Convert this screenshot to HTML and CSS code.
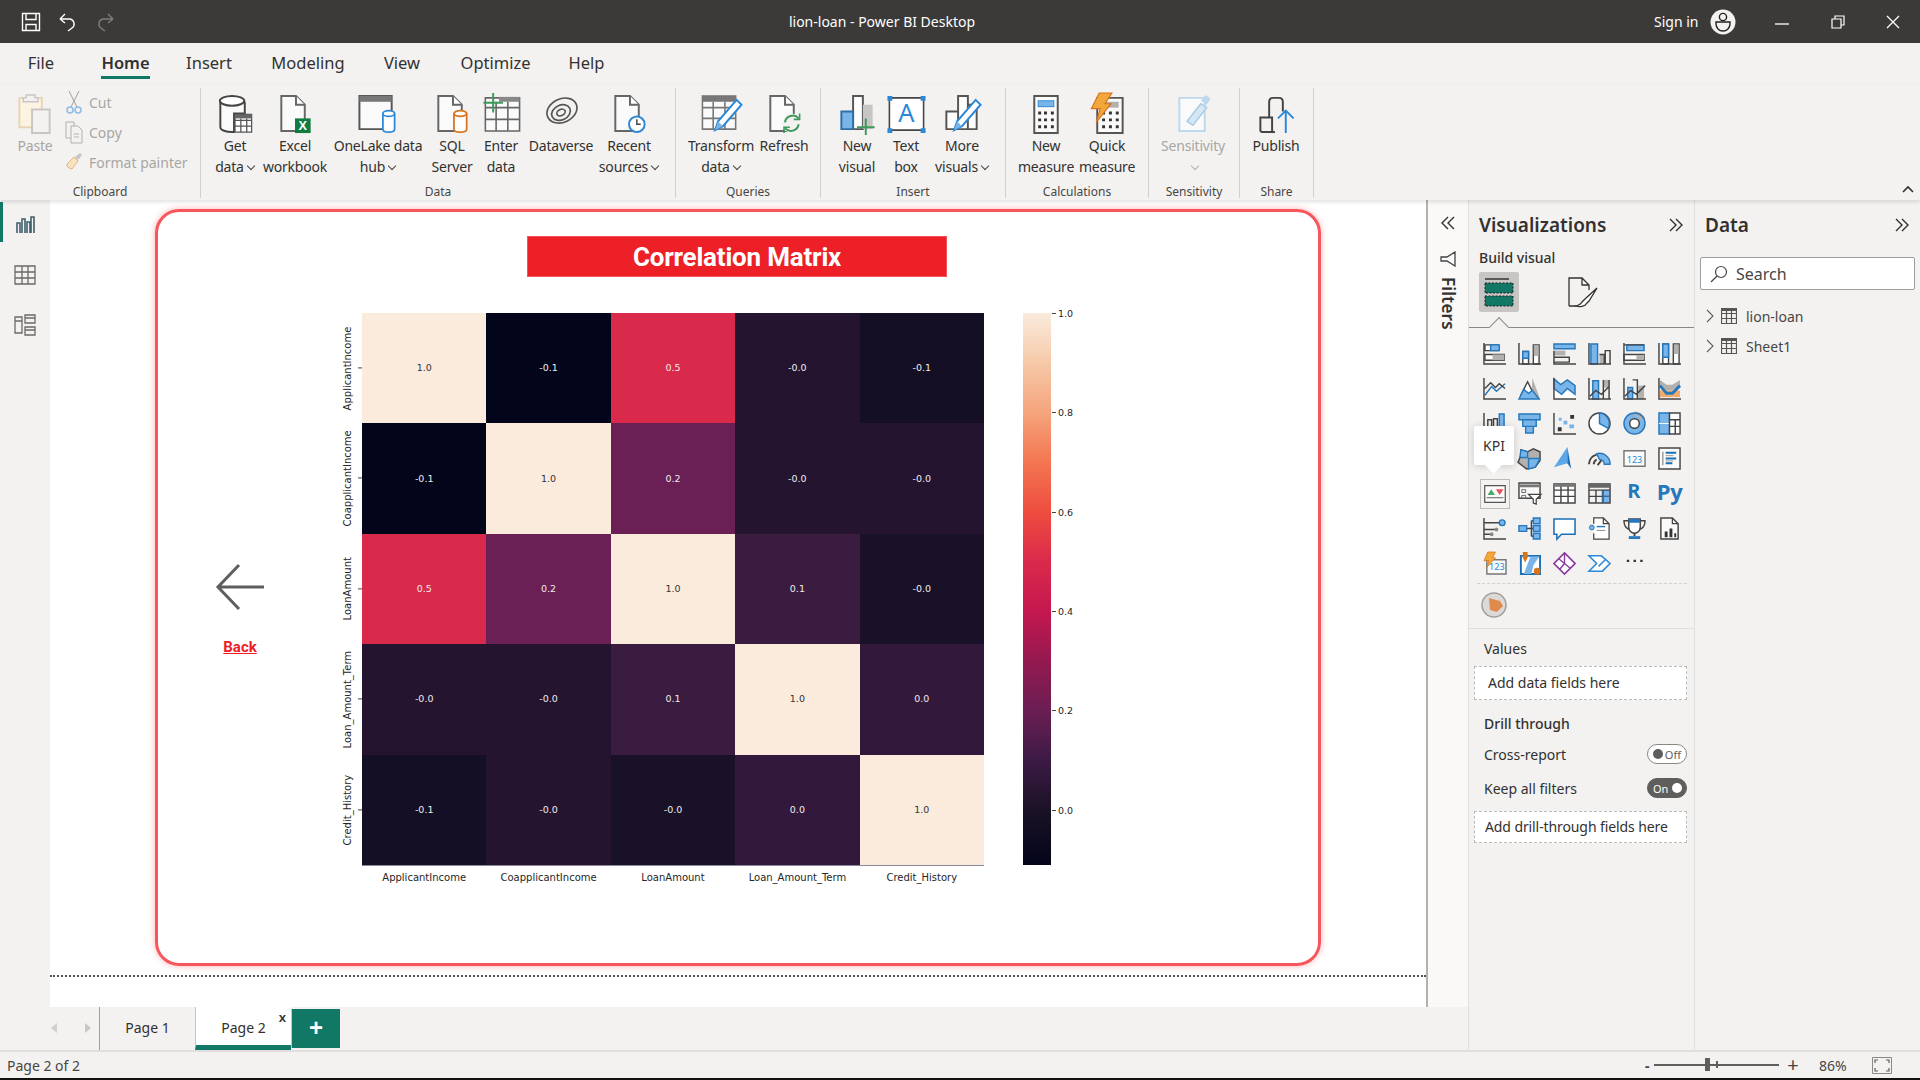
FILE: index.html
```html
<!DOCTYPE html>
<html>
<head>
<meta charset="utf-8"/>
<title>lion-loan - Power BI Desktop</title>
<link rel="stylesheet" href="styles.css">
</head>
<body>
<svg class="defs" width="0" height="0">
  <symbol id="grid" viewBox="0 0 16 16"><path d="M.5.5h15v15H.5zM.5 5.5h15M.5 10.5h15M5.5 3v12.5M10.5 3v12.5" fill="none" stroke="#555" stroke-width="1.2"/><rect width="16" height="3" fill="#555"/></symbol>
  <symbol id="doc" viewBox="0 0 40 44"><path d="M6 4h15l9 9v27H6z" fill="#fafafa" stroke="#666" stroke-width="2"/><path d="M21 4v9h9" fill="#fff" stroke="#666" stroke-width="2"/></symbol>
  <symbol id="pencil" viewBox="0 0 40 44"><path d="M32 8l5 5-19 22-8 4 3-9z" fill="#fff" stroke="#2b88d8" stroke-width="2"/><path d="M10 39l3-9 5 5z" fill="#7ab5ea"/></symbol>
  <symbol id="chev2" viewBox="0 0 16 16"><path d="M2 2l6 6-6 6M8 2l6 6-6 6" fill="none" stroke="#323130" stroke-width="1.4"/></symbol>
</svg>

<div class="app">
  <header class="titlebar">
    <div class="qat">
      <svg width="20" height="20" viewBox="0 0 20 20"><path d="M1.5 1.5h17v17h-17zM5 1.5v6h10v-6M5 18.5v-6h10v6" fill="none" stroke="#fff" stroke-width="1.4"/></svg>
      <svg width="20" height="20" viewBox="0 0 20 20"><path d="M2 7h10a5 5 0 0 1 2 9l-4 3M2 7l5-5M2 7l5 4" fill="none" stroke="#fff" stroke-width="1.4"/></svg>
      <svg width="20" height="20" viewBox="0 0 20 20"><path d="M18 7H8a5 5 0 0 0-2 9l4 3M18 7l-5-5M18 7l-5 4" fill="none" stroke="#807e7c" stroke-width="1.4"/></svg>
    </div>
    <div class="app-title">lion-loan - Power BI Desktop</div>
    <div class="win">
      <span class="signin">Sign in</span>
      <svg class="avatar" width="26" height="26" viewBox="0 0 26 26"><circle cx="13" cy="13" r="12.5" fill="#f3f2f1"/><circle cx="13" cy="8" r="3.6" fill="none" stroke="#222" stroke-width="1.4"/><path d="M6 13h14v2a7 7 0 0 1-14 0z" fill="none" stroke="#222" stroke-width="1.4"/></svg>
      <svg class="btn-min" width="14" height="14" viewBox="0 0 14 14"><path d="M0 9h14" stroke="#fff" stroke-width="1.3"/></svg>
      <svg class="btn-max" width="14" height="14" viewBox="0 0 14 14"><path d="M1 4h9v9H1zM4 4V1h9v9h-3" fill="none" stroke="#fff" stroke-width="1.2"/></svg>
      <svg class="btn-close" width="14" height="14" viewBox="0 0 14 14"><path d="M1 1l12 12M13 1L1 13" stroke="#fff" stroke-width="1.3"/></svg>
    </div>
  </header>

  <nav class="tabs">
    <span>File</span><span class="on">Home</span><span>Insert</span><span>Modeling</span><span>View</span><span>Optimize</span><span>Help</span>
  </nav>

  <section class="ribbon">
    <div class="group g-clip">
      <div class="items">
        <div class="item off">
          <svg width="40" height="44" viewBox="0 0 40 44"><path d="M4 6h23v30H4z" fill="#fdf3e3" stroke="#e8d5b5" stroke-width="2"/><path d="M11 6V3h9v3h3v4H8V6z" fill="#f3f2f1" stroke="#c8c6c4" stroke-width="1.5"/><path d="M17 18h18v24H17z" fill="#f3f2f1" stroke="#c8c6c4" stroke-width="2"/></svg>
          <span class="lbl">Paste</span>
        </div>
        <div class="small off">
          <div><svg width="16" height="26" viewBox="0 0 16 26"><path d="M3 2l8 16M13 2L5 18" stroke="#a19f9d" fill="none"/><circle cx="4" cy="21" r="3" fill="none" stroke="#8fbce6" stroke-width="1.5"/><circle cx="12" cy="21" r="3" fill="none" stroke="#8fbce6" stroke-width="1.5"/></svg>Cut</div>
          <div><svg width="18" height="24" viewBox="0 0 18 24"><path d="M1 2h8v16H1z" fill="none" stroke="#b3b0ad"/><path d="M6 6h7l4 4v13H6z" fill="#f3f2f1" stroke="#b3b0ad"/><path d="M9 14h5M9 17h5" stroke="#b3b0ad"/></svg>Copy</div>
          <div><svg width="18" height="22" viewBox="0 0 18 22"><path d="M2 13l7-7 4 4-6 8-3-1-2-2z" fill="#f9e2c0" stroke="#e2b47e"/><path d="M10 6l5-4 2 2-4 5z" fill="#c8c6c4"/></svg>Format painter</div>
        </div>
      </div>
      <div class="gname">Clipboard</div>
    </div>

    <div class="group g-data">
      <div class="items">
        <div class="item">
          <svg width="40" height="44" viewBox="0 0 40 44"><path d="M5 10v26c0 3 6 5 12 5h2V22h11V10" fill="#fafafa" stroke="#444" stroke-width="2"/><ellipse cx="17" cy="9" rx="12.5" ry="5" fill="#fff" stroke="#444" stroke-width="2"/><path d="M20 23h17v18H20zM20 29h17M20 35h17M26 27v14M32 27v14" fill="#fff" stroke="#555" stroke-width="1.3"/><rect x="20" y="23" width="17" height="4" fill="#666"/></svg>
          <span class="lbl">Get<br>data<i class="dd"></i></span>
        </div>
        <div class="item">
          <svg width="40" height="44" viewBox="0 0 40 44"><use href="#doc"/><rect x="20" y="27" width="16" height="15" fill="#107c41"/><text x="28" y="39" class="xl">X</text></svg>
          <span class="lbl">Excel<br>workbook</span>
        </div>
        <div class="item">
          <svg width="44" height="44" viewBox="0 0 44 44"><path d="M3 4h33v34H3z" fill="#fafafa" stroke="#555" stroke-width="2"/><rect x="3" y="4" width="33" height="6" fill="#777"/><path d="M27 22v16c0 2 3 3 6 3s6-1 6-3V22" fill="#fff" stroke="#2b88d8" stroke-width="1.8"/><ellipse cx="33" cy="22" rx="6" ry="3" fill="#fff" stroke="#2b88d8" stroke-width="1.8"/></svg>
          <span class="lbl">OneLake data<br>hub<i class="dd"></i></span>
        </div>
        <div class="item">
          <svg width="40" height="44" viewBox="0 0 40 44"><use href="#doc"/><path d="M22 22v16c0 2 3 3 6.5 3s6.5-1 6.5-3V22" fill="#fff" stroke="#d9731a" stroke-width="1.8"/><ellipse cx="28.5" cy="22" rx="6.5" ry="3" fill="#fff" stroke="#d9731a" stroke-width="1.8"/></svg>
          <span class="lbl">SQL<br>Server</span>
        </div>
        <div class="item">
          <svg width="40" height="44" viewBox="0 0 40 44"><path d="M4 6h35v34H4zM4 16h35M4 28h35M15 10v30M27 10v30" fill="#fafafa" stroke="#666" stroke-width="1.6"/><rect x="18" y="5" width="21" height="5" fill="#888"/><path d="M12 1v20M2 11h20" stroke="#3d9a5b" stroke-width="2"/></svg>
          <span class="lbl">Enter<br>data</span>
        </div>
        <div class="item">
          <svg width="40" height="44" viewBox="0 0 40 44"><g fill="none" stroke="#555" stroke-width="1.7"><ellipse cx="21" cy="19" rx="16" ry="12" transform="rotate(-25 21 19)"/><ellipse cx="20" cy="21" rx="10" ry="7.5" transform="rotate(-25 20 21)"/><ellipse cx="20" cy="21" rx="4.5" ry="3.2" transform="rotate(-25 20 21)"/></g></svg>
          <span class="lbl">Dataverse</span>
        </div>
        <div class="item">
          <svg width="40" height="44" viewBox="0 0 40 44"><use href="#doc"/><circle cx="28" cy="33" r="8" fill="#fff" stroke="#2b88d8" stroke-width="2"/><path d="M28 28v5h4" fill="none" stroke="#444" stroke-width="1.5"/></svg>
          <span class="lbl">Recent<br>sources<i class="dd"></i></span>
        </div>
      </div>
      <div class="gname">Data</div>
    </div>

    <div class="group g-query">
      <div class="items">
        <div class="item">
          <svg width="44" height="44" viewBox="0 0 44 44"><path d="M3 4h34v34H3zM3 16h34M3 27h34M14 10v28M26 10v28" fill="#fafafa" stroke="#777" stroke-width="1.6"/><rect x="3" y="4" width="34" height="6" fill="#777"/><use href="#pencil" x="4" y="0"/></svg>
          <span class="lbl">Transform<br>data<i class="dd"></i></span>
        </div>
        <div class="item">
          <svg width="40" height="44" viewBox="0 0 40 44"><use href="#doc"/><circle cx="28" cy="32" r="10" fill="#f3f2f1"/><path d="M21 31a8 8 0 0 1 14-4M35 33a8 8 0 0 1-14 4" fill="none" stroke="#3d9a5b" stroke-width="2"/><path d="M36 22v6h-6M20 42v-6h6" fill="none" stroke="#3d9a5b" stroke-width="1.6"/></svg>
          <span class="lbl">Refresh</span>
        </div>
      </div>
      <div class="gname">Queries</div>
    </div>

    <div class="group g-insert">
      <div class="items">
        <div class="item">
          <svg width="40" height="44" viewBox="0 0 40 44"><path d="M16 4h10v34H16z" fill="#fff" stroke="#555" stroke-width="2"/><rect x="26" y="13" width="10" height="25" fill="#c8c6c4"/><path d="M4 20h12v18H4z" fill="#7ab5ea" stroke="#2b6ea8" stroke-width="2"/><path d="M29 27v17M20 36h18" stroke="#3d9a5b" stroke-width="2"/></svg>
          <span class="lbl">New<br>visual</span>
        </div>
        <div class="item">
          <svg width="40" height="44" viewBox="0 0 40 44"><path d="M3 6h35v33H3z" fill="#fff" stroke="#444" stroke-width="1.6"/><path d="M1 4h5v5H1zM35 4h5v5h-5zM1 37h5v5H1zM35 37h5v5h-5z" fill="#2b88d8"/><text x="20.5" y="31" class="boxa">A</text></svg>
          <span class="lbl">Text<br>box</span>
        </div>
        <div class="item">
          <svg width="40" height="44" viewBox="0 0 40 44"><path d="M16 4h10v34H16zM4 20h12v18H4zM26 13h9v25h-9z" fill="#fff" stroke="#555" stroke-width="2"/><use href="#pencil" x="2" y="0"/></svg>
          <span class="lbl">More<br>visuals<i class="dd"></i></span>
        </div>
      </div>
      <div class="gname">Insert</div>
    </div>

    <div class="group g-calc">
      <div class="items">
        <div class="item">
          <svg width="40" height="44" viewBox="0 0 40 44"><path d="M8 4h24v38H8z" fill="#fafafa" stroke="#555" stroke-width="2"/><rect x="12" y="9" width="16" height="6" fill="#7ab5ea" stroke="#2b88d8"/><path d="M12 20h3v3h-3zM18 20h3v3h-3zM25 20h3v3h-3zM12 27h3v3h-3zM18 27h3v3h-3zM25 27h3v3h-3zM12 34h3v3h-3zM18 34h3v3h-3zM25 34h3v3h-3z" fill="#333"/></svg>
          <span class="lbl">New<br>measure</span>
        </div>
        <div class="item">
          <svg width="40" height="44" viewBox="0 0 40 44"><path d="M10 6h26v36H10z" fill="#fafafa" stroke="#555" stroke-width="2"/><rect x="19" y="10" width="13" height="6" fill="#b3b0ad"/><path d="M15 20h3v3h-3zM22 20h3v3h-3zM29 20h3v3h-3zM15 27h3v3h-3zM22 27h3v3h-3zM29 27h3v3h-3zM15 34h3v3h-3zM22 34h3v3h-3zM29 34h3v3h-3z" fill="#333"/><path d="M12 1h13l-7 11h6L9 31l4-14H4z" fill="#f2a73b" stroke="#d9731a" stroke-width="1.2"/></svg>
          <span class="lbl">Quick<br>measure</span>
        </div>
      </div>
      <div class="gname">Calculations</div>
    </div>

    <div class="group g-sens">
      <div class="items">
        <div class="item off">
          <svg width="40" height="44" viewBox="0 0 40 44"><path d="M6 6h26v34H6z" fill="#fafafa" stroke="#bcd9ee" stroke-width="2"/><path d="M14 30l14-18 6 4-14 18z" fill="#d6e7f4" stroke="#a7cbe6" stroke-width="1.5"/><path d="M28 9l5-6 5 4-4 6z" fill="#bcd9ee"/></svg>
          <span class="lbl">Sensitivity<br><i class="dd only"></i></span>
        </div>
      </div>
      <div class="gname">Sensitivity</div>
    </div>

    <div class="group g-share">
      <div class="items">
        <div class="item">
          <svg width="40" height="44" viewBox="0 0 40 44"><path d="M4 26h12v15H6q-2 0-2-2zM13 26V10q0-4 4-4h6q4 0 4 4v10" fill="none" stroke="#444" stroke-width="2"/><path d="M19 41h-3" stroke="#444" stroke-width="2"/><path d="M30 42V19M22 27l8-8 8 8" fill="none" stroke="#2b88d8" stroke-width="2"/></svg>
          <span class="lbl">Publish</span>
        </div>
      </div>
      <div class="gname">Share</div>
    </div>

    <svg class="collapse" width="12" height="8" viewBox="0 0 12 8"><path d="M1 7l5-5 5 5" fill="none" stroke="#323130" stroke-width="1.6"/></svg>
  </section>

  <main class="main">
    <div class="report">
      <div class="work">
        <aside class="rail">
          <div class="rail-btn active"><svg width="20" height="20" viewBox="0 0 20 20"><path d="M2 18V8h3v10M7 18V4h3v14M12 18V7h3v11M16 18V2h3v16" fill="none" stroke="#3f5e6b" stroke-width="1.6"/></svg></div>
          <div class="rail-btn"><svg width="22" height="20" viewBox="0 0 22 20"><path d="M1 1h20v18H1zM1 7h20M1 13h20M8 1v18M14 1v18" fill="none" stroke="#6b6967" stroke-width="1.3"/></svg></div>
          <div class="rail-btn"><svg width="22" height="22" viewBox="0 0 22 22"><path d="M1 3h7v16H1zM1 7h7M11 1h10v8H11zM11 4h10M11 13h10v8H11zM11 16h10" fill="none" stroke="#6b6967" stroke-width="1.3"/></svg></div>
        </aside>

        <div class="canvas">
          <div class="frame"></div>
          <div class="report-title">Correlation Matrix</div>
          <svg class="back-arrow" width="50" height="48" viewBox="0 0 50 48"><path d="M49 24H3M24 2L3 24l21 22" fill="none" stroke="#605e5c" stroke-width="3"/></svg>
          <a class="back-link">Back</a>

          <div class="heatmap">
            <div class="ylabels">
              <span>ApplicantIncome</span><span>CoapplicantIncome</span><span>LoanAmount</span><span>Loan_Amount_Term</span><span>Credit_History</span>
            </div>
            <div class="cells">
              <div class="c10 ink">1.0</div><div class="cm1">-0.1</div><div class="c5">0.5</div><div class="c00">-0.0</div><div class="cm0">-0.1</div>
              <div class="cm1">-0.1</div><div class="c10 ink">1.0</div><div class="c2">0.2</div><div class="c00">-0.0</div><div class="c00">-0.0</div>
              <div class="c5">0.5</div><div class="c2">0.2</div><div class="c10 ink">1.0</div><div class="c1">0.1</div><div class="cn">-0.0</div>
              <div class="c00">-0.0</div><div class="c00">-0.0</div><div class="c1">0.1</div><div class="c10 ink">1.0</div><div class="c0">0.0</div>
              <div class="cm0">-0.1</div><div class="c00">-0.0</div><div class="cn">-0.0</div><div class="c0">0.0</div><div class="c10 ink">1.0</div>
            </div>
            <div></div>
            <div class="xlabels">
              <span>ApplicantIncome</span><span>CoapplicantIncome</span><span>LoanAmount</span><span>Loan_Amount_Term</span><span>Credit_History</span>
            </div>
          </div>

          <div class="colorbar">
            <span style="top:0%">1.0</span><span style="top:18%">0.8</span><span style="top:36%">0.6</span><span style="top:54%">0.4</span><span style="top:72%">0.2</span><span style="top:90%">0.0</span>
          </div>

          <div class="page-edge"></div>
        </div>

        <aside class="filters">
          <svg class="flip" width="16" height="16"><use href="#chev2"/></svg>
          <svg class="funnel" width="16" height="16" viewBox="0 0 16 16"><path d="M15 1v14L7 10H1V6h6z" fill="none" stroke="#444" stroke-width="1.3"/></svg>
          <div class="filters-text">Filters</div>
        </aside>
      </div>

      <div class="pagetabs">
        <i class="tri left"></i><i class="tri right"></i>
        <div class="ptab">Page 1</div>
        <div class="ptab cur">Page 2<span class="x">x</span></div>
        <div class="padd">+</div>
      </div>
    </div>

    <aside class="viz">
      <div class="pane-head"><span>Visualizations</span><svg width="16" height="16"><use href="#chev2"/></svg></div>
      <div class="sub">Build visual</div>
      <div class="viz-modes">
        <div class="mode sel"><svg width="30" height="30" viewBox="0 0 30 30"><path d="M1 2h24" stroke="#333" stroke-width="1.5"/><rect x="1" y="6" width="28" height="10" fill="#117865" stroke="#222" stroke-dasharray="2 1.5"/><rect x="1" y="19" width="28" height="10" fill="#117865" stroke="#222" stroke-dasharray="2 1.5"/></svg></div>
        <div class="mode"><svg width="32" height="32" viewBox="0 0 32 32"><path d="M2 30V2h13l7 7v5M15 2v7h7M2 30h8" fill="none" stroke="#333" stroke-width="1.3"/><path d="M30 12L18 23l-3 3c-1 2-3 3-6 4 3 1 9 1 11-3l2-2z" fill="#fff" stroke="#333" stroke-width="1.3"/></svg></div>
      </div>
      <div class="rule"><i></i></div>

      <div class="gallery">
        <svg viewBox="0 0 24 24"><path class="iw" d="M2 3h14v6H2zM2 13h20v6H2z"/><path class="ib" d="M8 3h9v6H8z"/><path class="ig" d="M10 13h12v6H10z"/><path class="ik" d="M1 1v22h23"/></svg>
        <svg viewBox="0 0 24 24"><path class="iw" d="M5 10h6v13H5zM16 3h6v20h-6z"/><path class="ib" d="M5 10h6v7H5z"/><path class="ig" d="M16.500 3.500h5v11h-5z"/><path class="ik" d="M1 1v22h23"/></svg>
        <svg viewBox="0 0 24 24"><path class="ib" d="M1 2h22v5H1z"/><path class="ig" d="M1 9h12v5H1z"/><path class="ik" d="M1 16h16v5H1zM1 9v14h23"/></svg>
        <svg viewBox="0 0 24 24"><path class="ib" d="M3 2h7v21H3z"/><path class="ig" d="M12 13h5v10h-5z"/><path class="ik" d="M1 1v22h23M18 9h5v14h-5zM12 13h5v10"/></svg>
        <svg viewBox="0 0 24 24"><path class="ib" d="M4 3h18v6H4z"/><path class="iw" d="M1 13h21v6H1z"/><path class="ig" d="M14 13.500h8v5h-8z"/><path class="ik" d="M1 1v22h23M1 3h21"/></svg>
        <svg viewBox="0 0 24 24"><path class="iw" d="M5 2h6v21H5zM16 2h6v21h-6z"/><path class="ib" d="M5 2h6v14H5z"/><path class="ig" d="M16.500 2.500h5v10h-5z"/><path class="ik" d="M1 1v22h23"/></svg>

        <svg viewBox="0 0 24 24"><path d="M2 19l7-9 5 5 9-8" fill="none" stroke="#2677bb" stroke-width="1.5"/><path class="ik" d="M1 1v22h23M2 12l6-6 5 5 4-4 6 5"/></svg>
        <svg viewBox="0 0 24 24"><path class="ig" d="M15 1l8 22h-9z"/><path class="iw" d="M10 5l7 14H3z"/><path class="ib" d="M1 23l5-10 5 4 4-3 7 9z"/></svg>
        <svg viewBox="0 0 24 24"><path d="M1 21V14l8 5 6-5 8 6v3H1z" fill="#fff"/><path class="ib" d="M1 2l7 6 7-5 8 6v9l-8-6-6 6-8-6z"/><path class="ik" d="M1 1v22h23"/></svg>
        <svg viewBox="0 0 24 24"><path class="ib" d="M5 4h6v19H5z"/><path class="ig" d="M16 3h6v8h-6z"/><path class="ik" d="M1 1v22h23M16 3v20M22 3v20M2 20l6-6 6 4 8-8"/></svg>
        <svg viewBox="0 0 24 24"><path class="ib" d="M5 11h5v12H5z"/><path class="ig" d="M16 9h6v14h-6z"/><path class="ik" d="M1 1v22h23M10 3h5v20M2 20l6-6 6 4 9-9"/></svg>
        <svg viewBox="0 0 24 24"><path class="ig" d="M2 3l7 5h6l8-5v6l-8 5H9L2 9z"/><path d="M2 14h21v7H2z" fill="#f0a35c" opacity=".9"/><path d="M2 9l7 8h6l8-8" fill="none" stroke="#2677bb" stroke-width="3"/><path class="ik" d="M1 1v22h23"/></svg>

        <svg viewBox="0 0 24 24"><path class="ik" d="M1 1v22h23M5 23V8h4v15M11 23V7h4v16"/><path class="ib" d="M17 2h5v20h-5z"/></svg>
        <svg viewBox="0 0 24 24"><path class="ib" d="M1 2h22v6H1zM5 8h14v7H5zM8 15h8v7H8z"/></svg>
        <svg viewBox="0 0 24 24"><path class="ik" d="M1 1v22h23"/><path d="M18 3h4v4h-4zM5 16h4v4H5z" fill="#333"/><path d="M6 6h3v3H6zM11 9h4v4h-4zM17 13h5v4h-5z" fill="#7ab5ea"/></svg>
        <svg viewBox="0 0 24 24"><circle cx="12" cy="12" r="11" fill="#fff" stroke="#444" stroke-width="1.5"/><path class="ib" d="M12 1a11 11 0 0 1 9 16l-9-5z"/></svg>
        <svg viewBox="0 0 24 24"><circle cx="12" cy="12" r="8" fill="none" stroke="#7ab5ea" stroke-width="6"/><path d="M12 2a10 10 0 0 1 9 6" stroke="#b3b0ad" stroke-width="5" fill="none"/><circle cx="12" cy="12" r="11" fill="none" stroke="#2677bb" stroke-width="1.5"/><circle cx="12" cy="12" r="5" fill="#fff" stroke="#444" stroke-width="1.5"/></svg>
        <svg viewBox="0 0 24 24"><path class="ib" d="M1 1h11v22H1z"/><path d="M1 12h11" stroke="#fff"/><path class="iw" d="M12 1h11v22H12zM12 8h11M12 15h11M18 8v15"/></svg>

        <svg viewBox="0 0 24 24"></svg>
        <svg viewBox="0 0 24 24"><path class="ig" d="M3 3l7 2 6-3 7 3v9l-5 7-9 2-9-7 3-7z" stroke="#444" stroke-width="1.5"/><path class="ib" d="M11 12h12l-5 9-7 2z"/><path class="ib" d="M3 3l7 2v6H2z"/></svg>
        <svg viewBox="0 0 24 24"><path d="M15 0L1 21l14-4z" fill="#5da7e6"/><path d="M15 0l4 23-4-6z" fill="#1a6fb5"/></svg>
        <svg viewBox="0 0 24 24"><path d="M1 18a11 11 0 0 1 8-10" fill="none" stroke="#444" stroke-width="2"/><path class="ib" d="M9 7a11 11 0 0 1 14 11h-6a5 5 0 0 0-5-5z"/><path d="M6 18a6 6 0 0 1 3-5M10 19l4-5" fill="none" stroke="#444" stroke-width="2"/></svg>
        <svg viewBox="0 0 24 24"><path d="M1 4h22v16H1z" fill="#fafafa" stroke="#777" stroke-width="1.5"/><text x="12" y="16.500" class="cardnum">123</text></svg>
        <svg viewBox="0 0 24 24"><path d="M1 1h22v22H1z" fill="#fafafa" stroke="#444" stroke-width="1.5"/><path d="M5 5v14" stroke="#999" stroke-width="1.5"/><path d="M8 6h11M8 12h11M8 17h7" stroke="#1a6fb5" stroke-width="2"/><path d="M8 9h8M8 14.500h8" stroke="#999"/></svg>

        <svg class="kpi" viewBox="0 0 30 30"><path d="M4 6h22v18H4z" fill="#fafafa" stroke="#555" stroke-width="1.3"/><path d="M7 16l4-6 4 6z" fill="#4fa66d"/><path d="M16 10h8l-4 6z" fill="#e8505b"/><path d="M6 19h18" stroke="#555"/></svg>
        <svg viewBox="0 0 24 24"><path d="M1 1h22v16H1z" fill="#fafafa" stroke="#444" stroke-width="1.5"/><path d="M1 4h22" stroke="#777" stroke-width="3"/><path d="M4 8h4v3H4zM4 14h4v3H4z" fill="none" stroke="#666"/><path d="M11 13h13l-5 5v5l-3-1v-4z" fill="#fff" stroke="#444" stroke-width="1.3"/></svg>
        <svg viewBox="0 0 24 24"><path class="iw" d="M1 2h22v20H1zM1 8.500h22M1 15h22M8.300 2v20M15.700 2v20"/><path d="M1 2h22v3H1z" fill="#777"/></svg>
        <svg viewBox="0 0 24 24"><path d="M14 8h9v14h-9z" fill="#7ab5ea"/><path class="ik" d="M1 2h22v20H1zM1 8.500h22M1 15h22M8.300 8v14M15.700 8v14"/><path d="M1 2h22v4H1z" fill="#666"/><path d="M15.700 8.500v13.500M15.700 15H23" stroke="#2677bb"/></svg>
        <span class="lang r">R</span>
        <span class="lang">Py</span>

        <svg viewBox="0 0 24 24"><path class="ik" d="M1 1v22h23M1 6h16M1 13h12M1 18h7"/><circle cx="20" cy="6" r="3" fill="#7ab5ea" stroke="#2677bb" stroke-width="1.5"/><circle cx="14" cy="13" r="2" fill="#888"/><circle cx="9" cy="18" r="2" fill="#888"/></svg>
        <svg viewBox="0 0 24 24"><path class="ik" d="M9 12h5M14 4v16M14 4h2M14 12h2M14 20h2"/><path class="ib" d="M1 9h8v6H1zM16 1h7v6h-7zM16 9h7v6h-7zM16 17h7v6h-7z"/></svg>
        <svg viewBox="0 0 24 24"><path d="M1 2h22v16H9l-5 5v-5H1z" fill="#fff" stroke="#1a6fb5" stroke-width="1.6"/></svg>
        <svg viewBox="0 0 24 24"><path d="M6 7V1h10l6 6v16H6v-6" fill="#fff" stroke="#444" stroke-width="1.3"/><path d="M16 1v6h6" fill="none" stroke="#444" stroke-width="1.3"/><circle cx="4" cy="11" r="2.5" fill="#7ab5ea" stroke="#2677bb"/><path d="M9 10h9" stroke="#2677bb" stroke-width="1.5"/><path d="M9 14h9" stroke="#888"/></svg>
        <svg viewBox="0 0 24 24"><path d="M6 2h12v9a6 6 0 0 1-12 0z" fill="#fff" stroke="#444" stroke-width="1.5"/><path d="M6 2h12v4H6z" fill="#2677bb"/><path d="M6 4H1c0 5 2 8 6 9M18 4h5c0 5-2 8-6 9" fill="none" stroke="#444" stroke-width="1.5"/><path d="M12 17v3" stroke="#444" stroke-width="2"/><path d="M6 20h12v3H6z" fill="#2677bb"/></svg>
        <svg viewBox="0 0 24 24"><path d="M3 1h12l6 6v16H3z" fill="#fafafa" stroke="#444" stroke-width="1.5"/><path d="M15 1v6h6" fill="none" stroke="#444" stroke-width="1.3"/><path d="M7 15h3v6H7zM12 12h3v9h-3zM17 17h2v4h-2z" fill="#333"/></svg>

        <svg viewBox="0 0 24 24"><path d="M4 8h20v15H4z" fill="#fafafa" stroke="#777" stroke-width="1.5"/><text x="14.500" y="19" class="cardnum">123</text><path d="M5 0h8l-3 6h3L4 16l2-7H1z" fill="#f2a73b" stroke="#d9731a" stroke-width=".8"/></svg>
        <svg viewBox="0 0 24 24"><path d="M3 4h20v19H3z" fill="#fff" stroke="#1a6fb5" stroke-width="2"/><path d="M13 5h9l-6 9-2 9H6l3-8z" fill="#7ab5ea"/><path d="M5 0h5v6l-2.500 5L5 6z" fill="#d9731a"/><circle cx="20" cy="20" r="3.500" fill="#d9731a"/></svg>
        <svg viewBox="0 0 24 24"><path d="M12 1l11 11-11 11L1 12z" fill="#fff" stroke="#8a3b9e" stroke-width="1.8"/><path d="M12 1v11l6 5M6 7l6 5-5 6" fill="none" stroke="#8a3b9e" stroke-width="1.5"/></svg>
        <svg viewBox="0 0 24 24"><path d="M1 4h13l9 8-8 8H1l8-8z" fill="#fff" stroke="#2b88d8" stroke-width="1.6"/><path d="M11 15l7-7" stroke="#2b88d8" stroke-width="1.5"/></svg>
        <svg viewBox="0 0 24 24"><path d="M4 8h2.500v2.500H4zM11 8h2.500v2.500H11zM18 8h2.500v2.500H18z" fill="#333"/></svg>
      </div>

      <div class="dash"></div>
      <svg class="custom" width="26" height="26" viewBox="0 0 26 26"><circle cx="13" cy="13" r="12" fill="#dcdad8" stroke="#a19f9d" stroke-width="1.5"/><path d="M8 6l11 3 3 5-6 6-7-2z" fill="#e08b4d"/></svg>

      <div class="fields">
        <div class="f-head">Values</div>
        <div class="well">Add data fields here</div>
        <div class="f-head strong">Drill through</div>
        <div class="toggle-row first"><span>Cross-report</span><span class="toggle">Off</span></div>
        <div class="toggle-row"><span>Keep all filters</span><span class="toggle yes">On</span></div>
        <div class="well tight">Add drill-through fields here</div>
      </div>

      <div class="tooltip">KPI</div>
    </aside>

    <aside class="data">
      <div class="pane-head"><span>Data</span><svg width="16" height="16"><use href="#chev2"/></svg></div>
      <div class="search"><svg width="18" height="18" viewBox="0 0 18 18"><circle cx="11" cy="7" r="5.5" fill="none" stroke="#444" stroke-width="1.2"/><path d="M7 11l-6 6" stroke="#444" stroke-width="1.2"/></svg>Search</div>
      <div class="tree"><svg width="8" height="14" viewBox="0 0 8 14"><path d="M1 1l6 6-6 6" fill="none" stroke="#605e5c" stroke-width="1.1"/></svg><svg width="16" height="16"><use href="#grid"/></svg>lion-loan</div>
      <div class="tree"><svg width="8" height="14" viewBox="0 0 8 14"><path d="M1 1l6 6-6 6" fill="none" stroke="#605e5c" stroke-width="1.1"/></svg><svg width="16" height="16"><use href="#grid"/></svg>Sheet1</div>
    </aside>
  </main>

  <footer class="status">
    <span>Page 2 of 2</span>
    <div class="zoom">
      <span class="minus">-</span>
      <div class="slider"><i class="thumb"></i><i class="tick"></i></div>
      <span class="plus">+</span>
      <span class="pct">86%</span>
      <svg width="20" height="17" viewBox="0 0 20 17"><path d="M.5.5h19v16H.5z" fill="none" stroke="#8a8886"/><path d="M3 6V3h3M14 3h3v3M17 11v3h-3M6 14H3v-3" fill="none" stroke="#605e5c" stroke-width="1.2"/></svg>
    </div>
  </footer>
</div>
</body>
</html>
```

FILE: styles.css
```css
* {
   box-sizing: border-box;
}

body {
   margin: 0;
   background: #f3f2f1;
   font-family: "Noto Sans", "Open Sans", sans-serif;
   color: #323130;
   overflow: hidden;
}

.defs {
   position: absolute;
}

.app {
   width: 1920px;
   height: 1080px;
   display: flex;
   flex-direction: column;
   border-bottom: 2px solid #111;
}

/* title bar */
.titlebar {
   height: 43px;
   flex: none;
   background: #3b3a39;
   color: #fff;
   display: flex;
   align-items: center;
   font-size: 14px;
}

.qat {
   width: 787px;
   display: flex;
   gap: 17px;
   padding-left: 21px;
}

.app-title {
   width: 190px;
   text-align: center;
   white-space: nowrap;
}

.win {
   flex: 1;
   display: flex;
   align-items: center;
   padding-left: 677px;
}

.signin {
   width: 58px;
}

.avatar {
   margin-left: -2px;
}

.btn-min {
   margin-left: 39px;
}

.btn-max {
   margin-left: 42px;
}

.btn-close {
   margin-left: 41px;
}

/* ribbon tabs */
.tabs {
   height: 42px;
   flex: none;
   display: grid;
   grid-template-columns: 82px 87px 80px 118px 70px 117px 65px;
   align-items: center;
   font-size: 16.5px;
   text-align: center;
   padding-bottom: 3px;
}

.tabs .on {
   font-weight: 600;
   justify-self: center;
   position: relative;
}

.tabs .on::after {
   content: "";
   position: absolute;
   left: 0;
   right: 0;
   bottom: -5px;
   border-bottom: 3px solid #117865;
}

/* ribbon */
.ribbon {
   height: 115px;
   flex: none;
   display: flex;
   position: relative;
   z-index: 2;
   padding-top: 3px;
   box-shadow: 0 2px 4px rgba(0, 0, 0, .12);
}

.group {
   height: 110px;
   flex: none;
   border-right: 1px solid #d2d0ce;
   display: flex;
   flex-direction: column;
   font-size: 14px;
}

.items {
   height: 96px;
   flex: none;
   display: flex;
   padding-top: 4px;
}

.gname {
   text-align: center;
   font-size: 12px;
   line-height: 16px;
   color: #484644;
}

.item {
   flex: none;
   display: flex;
   flex-direction: column;
   align-items: center;
   white-space: nowrap;
}

.item > svg {
   flex: none;
   height: 43px;
}

.lbl {
   text-align: center;
   line-height: 21px;
   letter-spacing: -.2px;
}

.off {
   color: #a8a6a4;
}

.dd {
   display: inline-block;
   width: 6px;
   height: 6px;
   margin: 0 1px 3px 4px;
   border-right: 1.4px solid #444;
   border-bottom: 1.4px solid #444;
   transform: rotate(45deg);
}

.dd.only {
   border-color: #b3b0ad;
}

.g-clip {
   width: 201px;
}

.g-clip .items {
   padding-left: 14px;
}

.g-clip .item {
   width: 42px;
}

.small {
   margin-left: 9px;
   margin-top: -5px;
   font-size: 14px;
}

.small div {
   height: 30px;
   display: flex;
   align-items: center;
   gap: 6px;
}

.small svg {
   width: 18px;
   flex: none;
}

.g-data {
   width: 475px;
}

.g-data .items {
   padding-left: 4px;
}

.g-data .item:nth-child(1) { width: 60px; }
.g-data .item:nth-child(2) { width: 60px; }
.g-data .item:nth-child(3) { width: 106px; }
.g-data .item:nth-child(4) { width: 42px; }
.g-data .item:nth-child(5) { width: 56px; }
.g-data .item:nth-child(6) { width: 64px; }
.g-data .item:nth-child(7) { width: 72px; }

.g-query {
   width: 145px;
}

.g-query .items {
   padding-left: 3px;
}

.g-query .item:nth-child(1) { width: 84px; }
.g-query .item:nth-child(2) { width: 42px; }

.g-insert {
   width: 185px;
}

.g-insert .items {
   padding-left: 13px;
}

.g-insert .item:nth-child(1) { width: 46px; }
.g-insert .item:nth-child(2) { width: 52px; }
.g-insert .item:nth-child(3) { width: 60px; }

.g-calc {
   width: 143px;
}

.g-calc .items {
   padding-left: 10px;
}

.g-calc .item:nth-child(1) { width: 60px; }
.g-calc .item:nth-child(2) { width: 62px; }

.g-sens {
   width: 91px;
}

.g-sens .item {
   width: 88px;
}

.g-share {
   width: 74px;
}

.g-share .item {
   width: 72px;
}

.xl {
   font: 700 13px "Liberation Sans", sans-serif;
   fill: #fff;
   text-anchor: middle;
}

.boxa {
   font: 400 26px "Noto Sans", sans-serif;
   fill: #2b88d8;
   text-anchor: middle;
}

.collapse {
   position: absolute;
   right: 6px;
   bottom: 7px;
}

/* main area */
.main {
   flex: 1;
   min-height: 0;
   display: flex;
}

.report {
   width: 1469px;
   flex: none;
   display: flex;
   flex-direction: column;
   border-right: 1px solid #e1dfdd;
}

.work {
   height: 807px;
   display: flex;
}

.rail {
   width: 50px;
   flex: none;
}

.rail-btn {
   height: 50px;
   display: flex;
   align-items: center;
   justify-content: center;
   position: relative;
}

.rail-btn.active::before {
   content: "";
   position: absolute;
   left: 0;
   top: 2px;
   height: 40px;
   border-left: 3px solid #117865;
}

.canvas {
   width: 1378px;
   flex: none;
   position: relative;
   background: #fff;
   border-right: 2px solid #b3b0ad;
}

.filters {
   flex: 1;
   background: #faf9f8;
   display: flex;
   flex-direction: column;
   align-items: center;
   padding-top: 15px;
}

.flip {
   transform: scaleX(-1);
}

.funnel {
   margin-top: 20px;
}

.filters-text {
   writing-mode: vertical-rl;
   font-size: 17px;
   font-weight: 600;
   margin-top: 10px;
   letter-spacing: .2px;
}

/* things placed on the report canvas */
.frame {
   position: absolute;
   left: 105px;
   top: 9px;
   width: 1166px;
   height: 757px;
   border: 3px solid #f6565c;
   border-radius: 24px;
   box-shadow: 0 0 6px rgba(246, 86, 92, .45);
}

.report-title {
   position: absolute;
   left: 477px;
   top: 36px;
   width: 420px;
   height: 41px;
   background: #ed2027;
   color: #fff;
   font: 700 26px/41px "Roboto", sans-serif;
   letter-spacing: -.2px;
   text-align: center;
   border: 1px solid #f2545a;
}

.back-arrow {
   position: absolute;
   left: 165px;
   top: 363px;
}

.back-link {
   position: absolute;
   left: 173px;
   top: 437px;
   width: 34px;
   text-align: center;
   color: #ee1c25;
   font: 700 15px/20px "Roboto", sans-serif;
   text-decoration: underline;
}

.heatmap {
   position: absolute;
   left: 282px;
   top: 113px;
   display: grid;
   grid-template-columns: 30px 622px;
   grid-template-rows: 552px 26px;
   font-family: "DejaVu Sans", sans-serif;
   font-size: 10px;
   color: #262626;
}

.ylabels {
   display: grid;
   grid-template-rows: repeat(5, 1fr);
}

.ylabels span {
   writing-mode: vertical-rl;
   transform: rotate(180deg);
   text-align: center;
   white-space: nowrap;
   padding-right: 10px;
   position: relative;
}

.ylabels span::after {
   content: "";
   position: absolute;
   top: 50%;
   left: 0;
   width: 4px;
   border-top: 1px solid #444;
}

.cells {
   display: grid;
   grid-template-columns: repeat(5, 1fr);
   grid-template-rows: repeat(5, 1fr);
   font-size: 9.5px;
   color: #f2ecec;
}

.cells div {
   display: flex;
   align-items: center;
   justify-content: center;
   padding-bottom: 1px;
}

.ink { color: #333; }
.c10 { background: #faebdd; }
.cm1 { background: #03051a; }
.cm0 { background: #140f24; }
.c5 { background: #da2a4b; }
.c2 { background: #6a1f55; }
.c1 { background: #3a1c40; }
.c0 { background: #32183a; }
.c00 { background: #241430; }
.cn { background: #191128; }

.xlabels {
   display: grid;
   grid-template-columns: repeat(5, 1fr);
   text-align: center;
   white-space: nowrap;
   padding-top: 6px;
   border-top: 1px solid #8a8a9a;
}

.colorbar {
   position: absolute;
   left: 973px;
   top: 113px;
   width: 28px;
   height: 552px;
   background: linear-gradient(#faebdd 0%, #f6c9a8 9%, #f5a47c 18%, #f37651 27%, #ee4d3f 36%, #da2a4b 45%, #c5184f 54%, #94194f 63%, #6b1e53 72%, #3c1a45 81%, #1b1226 90%, #03051a 100%);
   font: 9.5px "DejaVu Sans", sans-serif;
   color: #262626;
}

.colorbar span {
   position: absolute;
   left: 28px;
   padding-left: 7px;
   line-height: 12px;
   margin-top: -5px;
}

.colorbar span::before {
   content: "";
   position: absolute;
   left: 1px;
   top: 5px;
   width: 4px;
   border-top: 1px solid #444;
}

.page-edge {
   position: absolute;
   left: 0;
   right: 0;
   top: 775px;
   border-top: 2px dotted #555;
}

/* page tabs */
.pagetabs {
   flex: 1;
   display: flex;
   align-items: stretch;
   padding-left: 99px;
   position: relative;
}

.tri {
   position: absolute;
   top: 16px;
   border: 5px solid transparent;
   border-left-width: 6px;
   border-right-width: 6px;
}

.tri.left {
   left: 51px;
   border-right-color: #d2d0ce;
   border-left-width: 0;
}

.tri.right {
   left: 85px;
   border-left-color: #c8c6c4;
   border-right-width: 0;
}

.ptab {
   width: 96px;
   border-left: 1px solid #a19f9d;
   display: flex;
   align-items: center;
   justify-content: center;
   padding-bottom: 2px;
   font-size: 14px;
   position: relative;
}

.ptab.cur {
   background: #fff;
   border-left-color: #c8c6c4;
   border-bottom: 5px solid #117865;
   padding-top: 3px;
   padding-bottom: 0;
}

.x {
   position: absolute;
   right: 5px;
   top: 2px;
   line-height: 16px;
   font-size: 13px;
   font-weight: 600;
}

.padd {
   width: 49px;
   margin: 2px 0;
   background: #117865;
   color: #fff;
   font: 700 24px/38px "Liberation Sans", sans-serif;
   text-align: center;
   border-left: 1px solid #c8c6c4;
}

/* right panes */
.viz {
   width: 226px;
   flex: none;
   position: relative;
   border-right: 1px solid #e1dfdd;
   font-size: 14px;
}

.pane-head {
   height: 50px;
   display: flex;
   align-items: center;
   justify-content: space-between;
   font-size: 19px;
   font-weight: 600;
   padding: 0 10px;
}

.sub {
   padding: 1px 0 0 10px;
   font-size: 14px;
   font-weight: 500;
   line-height: 14px;
}

.viz-modes {
   display: flex;
   gap: 44px;
   margin-top: 7px;
   padding-left: 10px;
}

.mode {
   width: 40px;
   height: 40px;
   display: flex;
   align-items: center;
   justify-content: center;
}

.mode.sel {
   background: #c8c6c4;
   border-radius: 2px;
}

.rule {
   margin-top: 15px;
   border-bottom: 1.5px solid #8a8886;
   position: relative;
}

.rule i {
   position: absolute;
   left: 23px;
   top: -7px;
   width: 14px;
   height: 14px;
   background: #f3f2f1;
   border-left: 1.5px solid #8a8886;
   border-top: 1.5px solid #8a8886;
   transform: rotate(45deg);
}

.gallery {
   display: grid;
   grid-template-columns: repeat(6, 35px);
   grid-auto-rows: 35px;
   justify-items: center;
   align-items: center;
   margin-top: 8px;
   padding-left: 8px;
}

.gallery svg {
   width: 23px;
   height: 23px;
   overflow: visible;
}

.gallery .kpi {
   width: 30px;
   height: 30px;
   border: 1px solid #bdbbb9;
}

.ik {
   fill: none;
   stroke: #444;
   stroke-width: 1.5;
}

.ib {
   fill: #7ab5ea;
   stroke: #2677bb;
   stroke-width: 1.5;
}

.ig {
   fill: #b3b0ad;
}

.iw {
   fill: #fff;
   stroke: #444;
   stroke-width: 1.5;
}

.cardnum {
   font: 400 9.5px "Noto Sans", sans-serif;
   fill: #2b88d8;
   text-anchor: middle;
}

.lang {
   color: #2677bb;
   font: 700 22px/24px "Open Sans", sans-serif;
   letter-spacing: -.5px;
   margin-bottom: 6px;
}

.lang.r {
   font-size: 20px;
   margin-right: 2px;
}

.dash {
   margin: 2px 7px 0 8px;
   border-top: 1px dashed #d2d0ce;
}

.custom {
   display: block;
   margin: 8px 0 0 12px;
}

.fields {
   margin-top: 10px;
   border-top: 1.5px solid #e1dfdd;
   padding: 10px 7px 0 5px;
}

.f-head {
   padding-left: 10px;
   line-height: 20px;
}

.f-head.strong {
   font-weight: 500;
   margin-top: 14px;
}

.well {
   background: #fff;
   border: 1px dashed #bdbbb9;
   height: 34px;
   line-height: 31px;
   padding-left: 13px;
   margin-top: 7px;
   white-space: nowrap;
}

.well.tight {
   height: 32px;
   line-height: 29px;
   padding-left: 10px;
   margin-top: 6px;
   letter-spacing: -.1px;
}

.toggle-row {
   height: 34px;
   display: flex;
   align-items: center;
   justify-content: space-between;
   padding-left: 10px;
}

.toggle-row.first {
   margin-top: 3px;
}

.toggle {
   width: 40px;
   height: 20px;
   border: 1px solid #8a8886;
   border-radius: 10px;
   background: #fff;
   font-size: 11px;
   line-height: 19px;
   color: #605e5c;
   text-align: right;
   padding-right: 5px;
   position: relative;
}

.toggle::before {
   content: "";
   position: absolute;
   left: 5px;
   top: 4px;
   width: 10px;
   height: 10px;
   border-radius: 50%;
   background: #605e5c;
}

.toggle.yes {
   background: #605e5c;
   border-color: #605e5c;
   color: #fff;
   text-align: left;
   padding: 0 0 0 5px;
}

.toggle.yes::before {
   left: 24px;
   background: #fff;
}

.tooltip {
   position: absolute;
   left: 5px;
   top: 226px;
   width: 40px;
   height: 39px;
   background: #fff;
   border-radius: 2px;
   box-shadow: 0 1px 8px rgba(0, 0, 0, .18);
   text-align: center;
   line-height: 39px;
   font-size: 14px;
}

.tooltip::after {
   content: "";
   position: absolute;
   left: 13px;
   bottom: -6px;
   width: 13px;
   height: 13px;
   background: #fff;
   transform: rotate(45deg);
}

.data {
   flex: 1;
   font-size: 14px;
}

.search {
   margin: 7px 5px 0 5px;
   height: 33px;
   background: #fff;
   border: 1px solid #a19f9d;
   border-radius: 2px;
   display: flex;
   align-items: center;
   gap: 8px;
   padding-left: 9px;
   font-size: 16px;
   color: #484644;
}

.tree {
   height: 30px;
   display: flex;
   align-items: center;
   padding-left: 11px;
   color: #484644;
   font-size: 14px;
}

.tree svg:first-child {
   margin-right: 7px;
}

.tree svg:nth-child(2) {
   margin-right: 9px;
}

.search + .tree {
   margin-top: 11px;
}

/* status bar */
.status {
   height: 28px;
   flex: none;
   border-top: 2px solid #e1dfdd;
   display: flex;
   align-items: center;
   justify-content: space-between;
   padding: 0 28px 0 7px;
   font-size: 14px;
   color: #484644;
}

.zoom {
   display: flex;
   align-items: center;
}

.minus {
   font-weight: 700;
   width: 9px;
}

.slider {
   width: 125px;
   height: 2px;
   background: #605e5c;
   position: relative;
}

.thumb {
   position: absolute;
   left: 51px;
   top: -6px;
   width: 5px;
   height: 13px;
   background: #605e5c;
}

.tick {
   position: absolute;
   left: 62px;
   top: -3px;
   width: 2px;
   height: 7px;
   background: #605e5c;
}

.plus {
   width: 26px;
   text-align: center;
   font-size: 20px;
   line-height: 20px;
   margin-left: 1px;
}

.pct {
   margin-left: 13px;
   width: 53px;
}
```
